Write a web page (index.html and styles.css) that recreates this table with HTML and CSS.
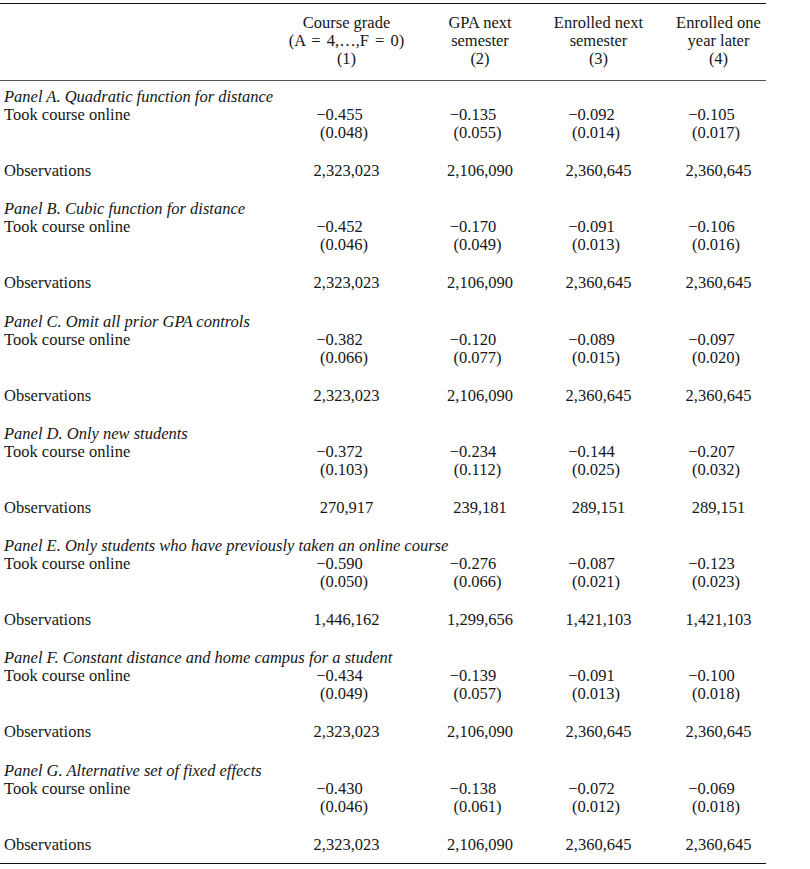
FILE: index.html
```html
<!DOCTYPE html>
<html lang="en">
<head>
<meta charset="utf-8">
<title>Robustness table</title>
<link rel="stylesheet" href="styles.css">
</head>
<body>
<div class="table">
  <div class="head">
    <div class="row">
      <div class="label"></div>
      <div class="c hd">Course grade<br><span class="math">(A = 4,…,F = 0)</span><br>(1)</div>
      <div class="c hd">GPA next<br>semester<br>(2)</div>
      <div class="c hd">Enrolled next<br>semester<br>(3)</div>
      <div class="c hd">Enrolled one<br>year later<br>(4)</div>
    </div>
  </div>

  <div class="panel">
    <div class="row"><div class="title">Panel A. Quadratic function for distance</div></div>
    <div class="row"><div class="label">Took course online</div><div class="c coef">−0.455</div><div class="c coef">−0.135</div><div class="c coef">−0.092</div><div class="c coef">−0.105</div></div>
    <div class="row"><div class="label"></div><div class="c se">(0.048)</div><div class="c se">(0.055)</div><div class="c se">(0.014)</div><div class="c se">(0.017)</div></div>
    <div class="row obs"><div class="label">Observations</div><div class="c">2,323,023</div><div class="c">2,106,090</div><div class="c">2,360,645</div><div class="c">2,360,645</div></div>
  </div>

  <div class="panel">
    <div class="row"><div class="title">Panel B. Cubic function for distance</div></div>
    <div class="row"><div class="label">Took course online</div><div class="c coef">−0.452</div><div class="c coef">−0.170</div><div class="c coef">−0.091</div><div class="c coef">−0.106</div></div>
    <div class="row"><div class="label"></div><div class="c se">(0.046)</div><div class="c se">(0.049)</div><div class="c se">(0.013)</div><div class="c se">(0.016)</div></div>
    <div class="row obs"><div class="label">Observations</div><div class="c">2,323,023</div><div class="c">2,106,090</div><div class="c">2,360,645</div><div class="c">2,360,645</div></div>
  </div>

  <div class="panel">
    <div class="row"><div class="title">Panel C. Omit all prior GPA controls</div></div>
    <div class="row"><div class="label">Took course online</div><div class="c coef">−0.382</div><div class="c coef">−0.120</div><div class="c coef">−0.089</div><div class="c coef">−0.097</div></div>
    <div class="row"><div class="label"></div><div class="c se">(0.066)</div><div class="c se">(0.077)</div><div class="c se">(0.015)</div><div class="c se">(0.020)</div></div>
    <div class="row obs"><div class="label">Observations</div><div class="c">2,323,023</div><div class="c">2,106,090</div><div class="c">2,360,645</div><div class="c">2,360,645</div></div>
  </div>

  <div class="panel">
    <div class="row"><div class="title">Panel D. Only new students</div></div>
    <div class="row"><div class="label">Took course online</div><div class="c coef">−0.372</div><div class="c coef">−0.234</div><div class="c coef">−0.144</div><div class="c coef">−0.207</div></div>
    <div class="row"><div class="label"></div><div class="c se">(0.103)</div><div class="c se">(0.112)</div><div class="c se">(0.025)</div><div class="c se">(0.032)</div></div>
    <div class="row obs"><div class="label">Observations</div><div class="c">270,917</div><div class="c">239,181</div><div class="c">289,151</div><div class="c">289,151</div></div>
  </div>

  <div class="panel">
    <div class="row"><div class="title">Panel E. Only students who have previously taken an online course</div></div>
    <div class="row"><div class="label">Took course online</div><div class="c coef">−0.590</div><div class="c coef">−0.276</div><div class="c coef">−0.087</div><div class="c coef">−0.123</div></div>
    <div class="row"><div class="label"></div><div class="c se">(0.050)</div><div class="c se">(0.066)</div><div class="c se">(0.021)</div><div class="c se">(0.023)</div></div>
    <div class="row obs"><div class="label">Observations</div><div class="c">1,446,162</div><div class="c">1,299,656</div><div class="c">1,421,103</div><div class="c">1,421,103</div></div>
  </div>

  <div class="panel">
    <div class="row"><div class="title">Panel F. Constant distance and home campus for a student</div></div>
    <div class="row"><div class="label">Took course online</div><div class="c coef">−0.434</div><div class="c coef">−0.139</div><div class="c coef">−0.091</div><div class="c coef">−0.100</div></div>
    <div class="row"><div class="label"></div><div class="c se">(0.049)</div><div class="c se">(0.057)</div><div class="c se">(0.013)</div><div class="c se">(0.018)</div></div>
    <div class="row obs"><div class="label">Observations</div><div class="c">2,323,023</div><div class="c">2,106,090</div><div class="c">2,360,645</div><div class="c">2,360,645</div></div>
  </div>

  <div class="panel last">
    <div class="row"><div class="title">Panel G. Alternative set of fixed effects</div></div>
    <div class="row"><div class="label">Took course online</div><div class="c coef">−0.430</div><div class="c coef">−0.138</div><div class="c coef">−0.072</div><div class="c coef">−0.069</div></div>
    <div class="row"><div class="label"></div><div class="c se">(0.046)</div><div class="c se">(0.061)</div><div class="c se">(0.012)</div><div class="c se">(0.018)</div></div>
    <div class="row obs"><div class="label">Observations</div><div class="c">2,323,023</div><div class="c">2,106,090</div><div class="c">2,360,645</div><div class="c">2,360,645</div></div>
  </div>
</div>
</body>
</html>
```

FILE: styles.css
```css
html, body {
  margin: 0;
  padding: 0;
  background: #ffffff;
}

body {
  font-family: "Liberation Serif", "Times New Roman", serif;
  font-size: 16.5px;
  line-height: 18px;
  color: #161616;
}

.table {
  width: 766px;
  margin-top: 3px;
  border-top: 1px solid #111;
  border-bottom: 1px solid #111;
  padding-bottom: 9px;
}

.row {
  display: grid;
  grid-template-columns: 281px 131px 136px 101px 139px;
  width: 788px;
}

.head {
  padding-top: 10px;
  padding-bottom: 12px;
  border-bottom: 1px solid #555;
  margin-bottom: 7px;
}

.label {
  padding-left: 4px;
  white-space: nowrap;
}

.title {
  grid-column: 1 / -1;
  padding-left: 4px;
  font-style: italic;
  white-space: nowrap;
}

.c {
  text-align: center;
  white-space: nowrap;
}

.hd .math {
  word-spacing: 2px;
}

.coef {
  padding-right: 14px;
}

.se {
  padding-right: 5px;
}

.panel {
  padding-bottom: 20.3px;
}

.panel.last {
  padding-bottom: 0;
}

.obs {
  margin-top: 20px;
}
```
